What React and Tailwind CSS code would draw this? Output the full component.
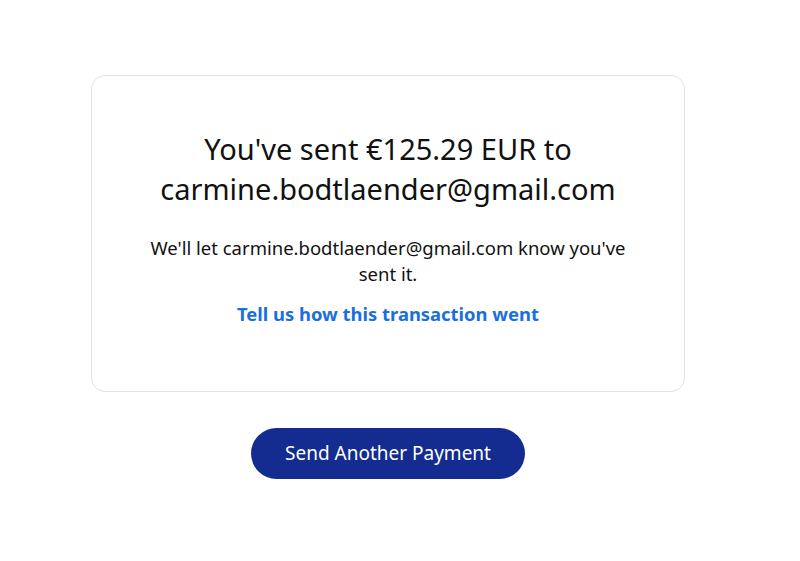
import React from "react";

const App = () => {
  return (
    <div
      className="min-h-[561px] bg-white flex flex-col items-center pt-[75px] pr-[24px]"
      style={{ fontFamily: '"Noto Sans", "Open Sans", sans-serif' }}
    >
      <div className="w-[594px] h-[317px] rounded-[14px] border border-[#e3e3e3] flex flex-col items-center pt-[53px] text-center">
        <h1 className="text-[29px] leading-[40px] text-[#111] font-normal">
          You've sent €125.29 EUR to
          <br />
          carmine.bodtlaender@gmail.com
        </h1>
        <p className="mt-[26px] text-[18.5px] leading-[26px] text-[#111]">
          We'll let carmine.bodtlaender@gmail.com know you've
          <br />
          sent it.
        </p>
        <a href="#" className="mt-[14px] text-[18.4px] leading-[26px] font-bold text-[#1a6fe0]">
          Tell us how this transaction went
        </a>
      </div>
      <button className="mt-[36px] w-[274px] h-[51px] rounded-full bg-[#142c8f] text-white text-[19px]">
        Send Another Payment
      </button>
    </div>
  );
};

export default App;
